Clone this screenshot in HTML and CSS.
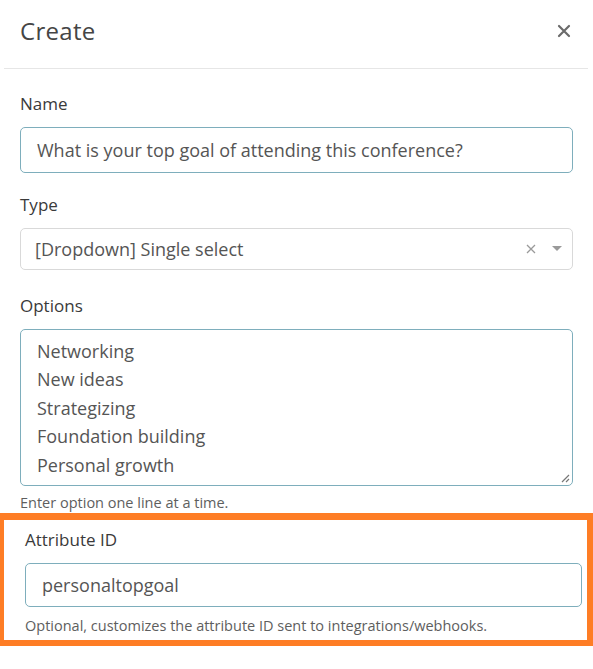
FILE: index.html
```html
<!DOCTYPE html>
<html lang="en">
<head>
<meta charset="utf-8">
<title>Create</title>
<link rel="stylesheet" href="styles.css">
</head>
<body>
<div class="modal">
  <div class="modal-header">
    <h1 class="modal-title">Create</h1>
    <button class="close" type="button" aria-label="Close">
      <svg width="14" height="14" viewBox="0 0 14 14"><path d="M2 2 L12 12 M12 2 L2 12" stroke="#6b6b6b" stroke-width="2.2" stroke-linecap="round"/></svg>
    </button>
  </div>
  <div class="modal-body">
    <div class="group">
      <label class="label">Name</label>
      <div class="field field-focus">What is your top goal of attending this conference?</div>
    </div>
    <div class="group group-select">
      <label class="label">Type</label>
      <div class="field field-select">
        <span class="select-value">[Dropdown] Single select</span>
        <span class="select-clear">
          <svg width="10" height="10" viewBox="0 0 10 10"><path d="M1 1 L9 9 M9 1 L1 9" stroke="#9a9a9a" stroke-width="1.3"/></svg>
        </span>
        <span class="select-caret">
          <svg width="10" height="6" viewBox="0 0 10 6"><path d="M0 0 L10 0 L5 5 Z" fill="#9a9a9a"/></svg>
        </span>
      </div>
    </div>
    <div class="group group-options">
      <label class="label">Options</label>
      <div class="field field-focus field-area">
        <div class="area-line">Networking</div>
        <div class="area-line">New ideas</div>
        <div class="area-line">Strategizing</div>
        <div class="area-line">Foundation building</div>
        <div class="area-line">Personal growth</div>
        <svg class="grip" width="10" height="10" viewBox="0 0 10 10"><path d="M9 2 L2 9 M9 6 L6 9" stroke="#777" stroke-width="1.2"/></svg>
      </div>
      <p class="help">Enter option one line at a time.</p>
    </div>
    <div class="highlight">
      <label class="label">Attribute ID</label>
      <div class="field field-focus field-attr">personaltopgoal</div>
      <p class="help help-attr">Optional, customizes the attribute ID sent to integrations/webhooks.</p>
    </div>
  </div>
</div>
</body>
</html>
```

FILE: styles.css
```css
* { box-sizing: border-box; }
html, body { margin: 0; padding: 0; background: #fff; }
body {
  font-family: "Open Sans", "Noto Sans", sans-serif;
  color: #333;
  width: 593px;
  height: 669px;
  overflow: hidden;
}
.modal-header {
  margin: 0 5px 0 4px;
  height: 69px;
  border-bottom: 1px solid #e6e6e6;
  display: flex;
  align-items: center;
  justify-content: space-between;
  padding: 0 16px 0 16px;
}
.modal-title {
  margin: 0;
  font-family: "Open Sans", sans-serif;
  font-weight: 400;
  font-size: 24px;
  letter-spacing: 0.3px;
  color: #454545;
  line-height: 30px;
  margin-top: -6px;
}
.close {
  border: 0;
  background: transparent;
  padding: 0;
  display: flex;
  margin-top: -6px;
  margin-right: 1px;
}
.modal-body {
  padding: 23px 20px 0 20px;
}
.label {
  display: block;
  font-size: 17px;
  line-height: 24px;
  color: #3a3a3a;
  margin-bottom: 11px;
}
.group { margin-bottom: 20px; }
.group-select { margin-bottom: 24px; }
.group-options { margin-bottom: 0; }
.field {
  border: 1px solid #d9d9d9;
  border-radius: 5px;
  font-size: 18px;
  color: #555;
  padding: 0 16px;
  height: 46px;
  display: flex;
  align-items: center;
  background: #fff;
}
.field-focus { border-color: #7eaebc; }
.field-select {
  height: 42px;
  padding: 0 12px 0 14px;
}
.select-value { flex: 1; }
.select-clear { display: flex; margin-right: 16px; }
.select-caret { display: flex; margin-right: -2px; }
.field-area {
  display: block;
  position: relative;
  height: 157px;
  padding: 7px 16px 0 16px;
}
.area-line { line-height: 28.4px; }
.grip { position: absolute; right: 2px; bottom: 2px; }
.help {
  margin: 7px 0 0 0;
  font-size: 14.5px;
  line-height: 20px;
  color: #5e5e5e;
}
.highlight {
  margin: 0 0 0 -20px;
  width: 593px;
  height: 133px;
  border-style: solid;
  border-color: #fe7d25;
  border-width: 7px 6px 6px 4px;
  padding: 8px 5px 0 21px;
}
.field-attr { height: 44px; }
.help-attr { margin-top: 9px; }
```
